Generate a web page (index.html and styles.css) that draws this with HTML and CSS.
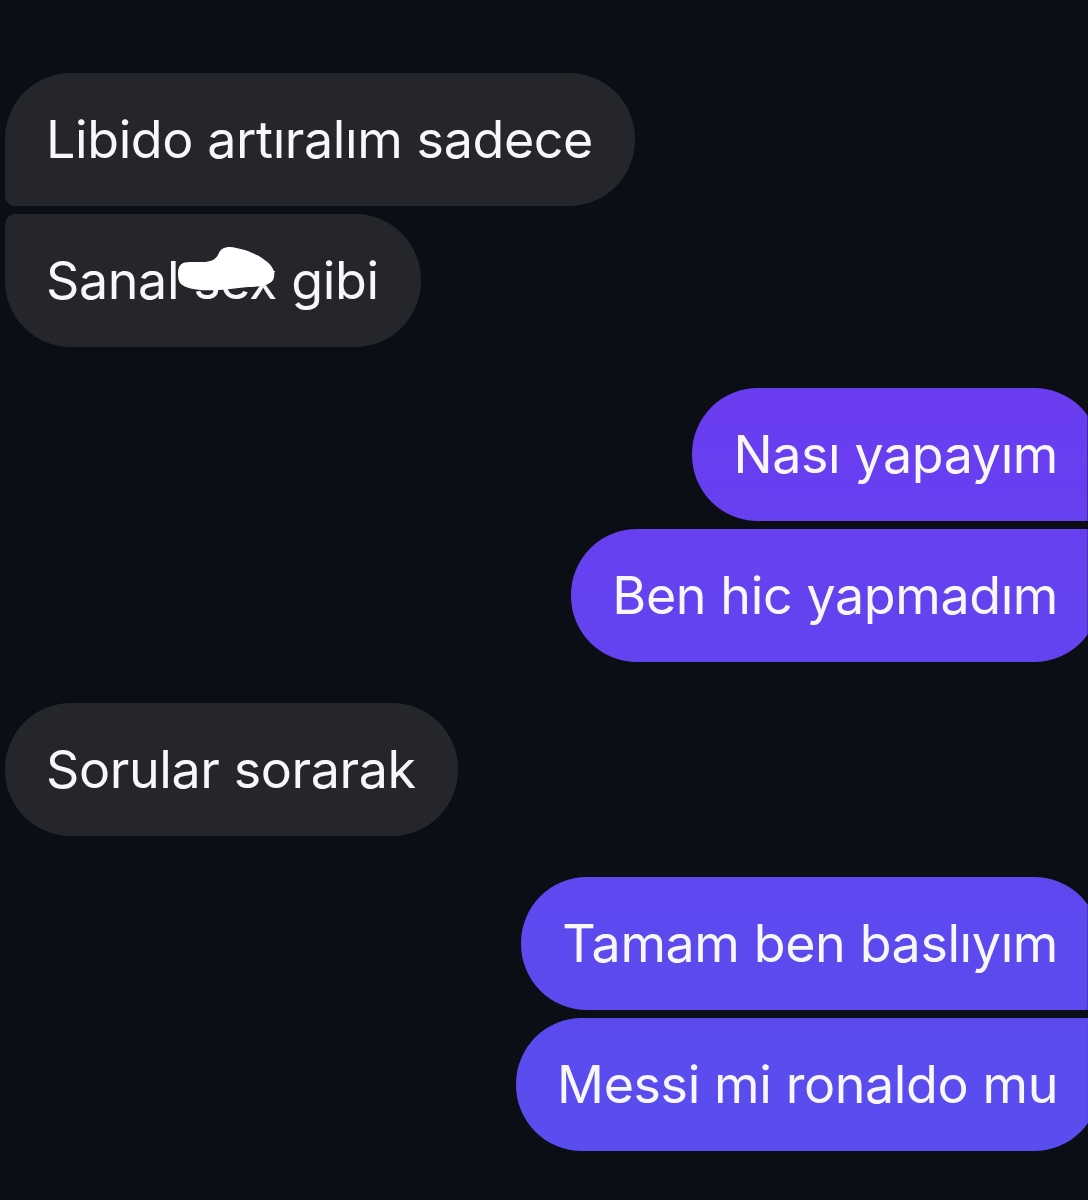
FILE: index.html
```html
<!DOCTYPE html>
<html lang="tr">
<head>
<meta charset="utf-8">
<title>Chat</title>
<link rel="stylesheet" href="styles.css">
</head>
<body>
<main class="chat">
  <section class="group group-in">
    <div class="bubble in first">Libido artıralım sadece</div>
    <div class="bubble in last redacted-wrap">Sanal sex gibi
      <svg class="scribble" width="115" height="60" viewBox="0 0 115 60" aria-hidden="true">
        <path d="M8,33 C8,25 12,22 20,22 L33,22 C40,22 45,20 48,15 C50,9 54,7 60,7 C72,8 88,14 96,21 C104,27 106,34 103,40 C99,46 88,47 78,47 C65,48 55,50 45,50 C30,51 15,49 10,43 C8,40 8,36 8,33 Z" fill="#ffffff"/>
      </svg>
    </div>
  </section>
  <section class="group group-out">
    <div class="bubble out first">Nası yapayım</div>
    <div class="bubble out last">Ben hic yapmadım</div>
  </section>
  <section class="group group-in">
    <div class="bubble in single">Sorular sorarak</div>
  </section>
  <section class="group group-out">
    <div class="bubble out first">Tamam ben baslıyım</div>
    <div class="bubble out last">Messi mi ronaldo mu</div>
  </section>
</main>
</body>
</html>
```

FILE: styles.css
```css
html, body {
  margin: 0;
  padding: 0;
  background: #0b0e14;
  overflow: hidden;
}

body {
  width: 1088px;
  height: 1200px;
  font-family: Inter, Roboto, "Liberation Sans", sans-serif;
}

.chat {
  display: flex;
  flex-direction: column;
  gap: 41px;
  padding-top: 73px;
}

.group {
  display: flex;
  flex-direction: column;
  gap: 8px;
}

.group-in {
  align-items: flex-start;
  padding-left: 5px;
}

.group-out {
  align-items: flex-end;
  margin-right: -12px;
}

.bubble {
  box-sizing: border-box;
  height: 133px;
  display: flex;
  align-items: center;
  padding: 0 42px 0 41px;
  font-size: 52px;
  font-weight: 400;
  letter-spacing: -0.4px;
  color: #f7f7f9;
  white-space: nowrap;
  border-radius: 66px;
}

.in {
  background: #24262b;
}

.out {
  background: linear-gradient(180deg, #6c3af0 0px, #6a3df0 400px, #5d49ef 900px, #584eef 1200px);
  background-attachment: fixed;
}

.in.first { border-bottom-left-radius: 10px; }
.in.last { border-top-left-radius: 10px; }
.out.first { border-bottom-right-radius: 10px; }
.out.last { border-top-right-radius: 10px; }

.redacted-wrap {
  position: relative;
}

.scribble {
  position: absolute;
  left: 165px;
  top: 26px;
}
```
